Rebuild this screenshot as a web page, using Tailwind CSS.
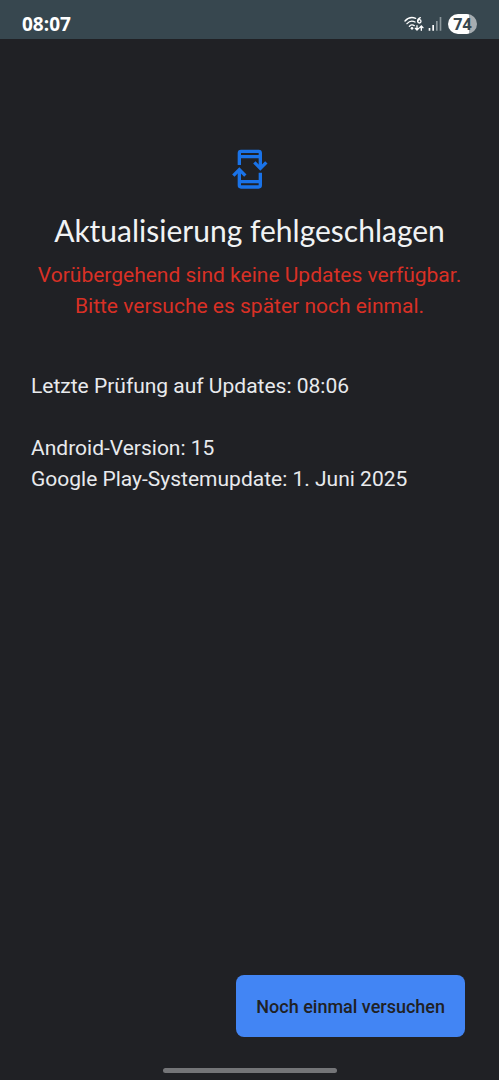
<!DOCTYPE html>
<html lang="de">
<head>
<meta charset="utf-8">
<meta name="viewport" content="width=device-width, initial-scale=1">
<title>Softwareupdate</title>
<script src="https://cdn.jsdelivr.net/npm/@tailwindcss/browser@4"></script>
</head>
<body class="flex min-h-screen flex-col bg-[#202125] font-['Roboto',sans-serif] text-[#e8eaed]">
  <header class="flex h-[39px] items-center justify-between bg-[#37474f] px-[22px] pt-2 text-white">
    <time class="font-['Open_Sans',sans-serif] text-[19px] leading-6 font-bold">08:07</time>
    <div class="flex items-center gap-1">
      <svg class="h-4 w-5" viewBox="0 0 60 48" fill="none" stroke="#fff" stroke-width="4" stroke-linecap="round" role="img" aria-label="WLAN 6">
        <path d="M3 15C12 5 25 3 35 7M9 23C16 15 26 14 33 18M16 31C20 26 27 26 31 29"/>
        <circle cx="24" cy="37" r="4" fill="#fff" stroke="none"/>
        <path d="M49 5C44 7 41 11 41 16"/>
        <circle cx="46" cy="16" r="5"/>
        <path d="M39 29V42M34 37L39 42L44 37M52 43V30M47 35L52 30L57 35"/>
      </svg>
      <svg class="h-4 w-[14px]" viewBox="0 0 42 48" role="img" aria-label="Mobilfunksignal">
        <path d="M2 36h5v8H2zM13 27h5v17h-5z" fill="#fff"/>
        <path d="M24 15h5v29h-5zM35 3h5v41h-5z" fill="#8b969b"/>
      </svg>
      <span class="ml-0.5 flex h-5 w-[29px] items-center justify-center rounded-full bg-linear-to-r from-white from-72% to-[#a6adb1] to-72% font-['Open_Sans',sans-serif] text-base leading-5 font-bold text-[#37474f]">74</span>
    </div>
  </header>

  <main class="flex grow flex-col px-[31px] pt-[109px]">
    <svg class="h-[42px] w-[38px] self-center" viewBox="0 0 114 126" fill="none" stroke="#1a73e8" stroke-width="10" aria-hidden="true">
      <path d="M25 51V15Q25 10 30 10H83Q88 10 88 15V60M25 26H88"/>
      <path d="M70 43L88 61L106 43"/>
      <path d="M88 74V112Q88 117 83 117H30Q25 117 25 112V66M25 101H88"/>
      <path d="M7 83L25 65L43 83"/>
    </svg>
    <h1 class="mt-5 text-center font-['Lato',sans-serif] text-[30px] leading-10 whitespace-nowrap text-[#f1f3f4]">Aktualisierung fehlgeschlagen</h1>
    <p class="mt-[10px] text-center text-[21px] leading-[31px] whitespace-nowrap text-[#d93025]">Vorübergehend sind keine Updates verfügbar.<br>Bitte versuche es später noch einmal.</p>
    <p class="mt-[49px] text-[21px] leading-[31px]">Letzte Prüfung auf Updates: 08:06</p>
    <p class="mt-[31px] text-[21px] leading-[31px]">Android-Version: 15<br>Google Play-Systemupdate: 1. Juni 2025</p>
  </main>

  <footer class="flex flex-col">
    <button type="button" class="mr-[34px] h-[62px] self-end rounded-lg bg-[#4285f4] px-5 text-[18px] font-medium text-[#202124]">Noch einmal versuchen</button>
    <div class="mt-[31px] mb-[7px] h-[5px] w-[174px] self-center rounded-full bg-[#747578]"></div>
  </footer>
</body>
</html>
